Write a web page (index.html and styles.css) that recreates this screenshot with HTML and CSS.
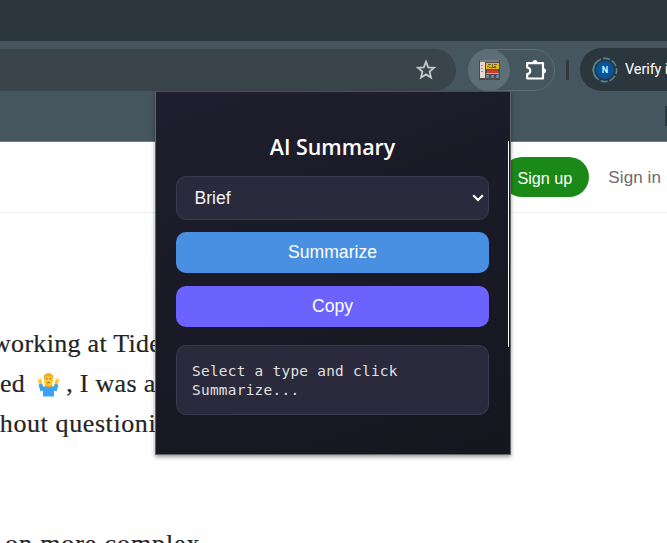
FILE: index.html
```html
<!DOCTYPE html>
<html lang="en">
<head>
<meta charset="utf-8">
<title>AI Summary</title>
<link rel="stylesheet" href="styles.css">
</head>
<body>
<div class="tabs"></div>
<div class="toolbar">
  <div class="omnibox">
    <svg width="22" height="22" viewBox="0 0 22 22"><path d="M11 2.7 13.2 8.3 19.1 8.8 14.6 12.6 16 18.5 11 15.4 6 18.5 7.4 12.6 2.9 8.8 8.8 8.3Z" fill="none" stroke="#c3c8ca" stroke-width="1.8"/></svg>
  </div>
  <div class="extensions">
    <div class="active-ext">
      <svg width="21" height="20" viewBox="0 0 21 20" shape-rendering="crispEdges">
        <path fill="#554943" d="M0 0h21v20H0z"/><path fill="#777b7d" d="M1 0h19v2H1z"/><path fill="#e6d8d0" d="M1 2h5v16H1z"/><path fill="#9b8d87" d="M2 5h2v1H2zM2 8h2v1H2zM2 11h2v1H2z"/><path fill="#e4b914" d="M7 3h13v6H7z"/><path fill="#765f1e" d="M9 4h3v1H9zM8 6h2v1H8zM13 4h1v3h-1zM15 4h3v1h-3zM15 6h2v1h-2zM10 7h7v1h-7z"/><path fill="#c93c30" d="M8 10h11v3H8z"/><path fill="#c3a08c" d="M7 13h13v1H7z"/><path fill="#438cad" d="M7 15h3v3H7zM12 15h3v3h-3zM17 15h3v3h-3z"/><path fill="#70adc2" d="M8 15h1v1H8zM13 15h1v1h-1zM18 15h1v1h-1z"/>
      </svg>
    </div>
    <svg class="puzzle" width="22" height="22" viewBox="0 0 22 22"><path d="M2.2 4.2H18V19.500H2.200V15.200C6.300 14.700 6.300 9 2.200 8.500Z" fill="none" stroke="#fff" stroke-width="2.200" stroke-linejoin="round"/><path d="M7.500 4a2.500 2.900 0 0 1 5 0zM18.500 9.200a2.500 2.600 0 0 1 0 5.200z" fill="#fff"/></svg>
  </div>
  <div class="divider"></div>
  <div class="profile">
    <svg width="26" height="26" viewBox="0 0 26 26"><circle cx="13" cy="13" r="11.6" fill="none" stroke="#568499" stroke-width="1.6" stroke-dasharray="7.2 2" stroke-dashoffset="3"/><path d="M4.8 21.2A11.6 11.6 0 0 1 4.8 4.8" fill="none" stroke="#568499" stroke-width="1.6"/><circle cx="13" cy="13" r="9" fill="#07559b"/><text class="initial" x="13" y="16.2" text-anchor="middle">N</text></svg>
    <span>Verify i</span>
  </div>
</div>
<div class="bookmarks"><i></i></div>
<header class="site-header"><a class="signup">Sign up</a><a class="signin">Sign in</a></header>
<main class="article">
  <p class="l1">working at Tide</p>
  <p class="l2"><span>ed</span><svg class="emoji" width="25" height="24" viewBox="0 0 25 24">
    <path d="M3 10 1 5.500 3.500 7 5 5l1 4 1 4 3 1v4L5 17zM22 10l2-4.500L21.500 7 20 5l-1 4-1 4-3 1v4l5-1z" fill="#ffc22e"/>
    <path d="M2.500 11.500 6 11l1.500 3 2.500-1h5l2.500 1L19 11l3.500.5L20.500 18.500l-2.500-1v6H7v-6l-2.500 1z" fill="#38a1f8"/>
    <path d="M9 11h7v2q-3.500 3-7 0z" fill="#efa51d"/><ellipse cx="12.500" cy="7" rx="4.800" ry="6" fill="#ffcb2e"/><path d="M7.600 6C7 1.500 10 .2 12.500.2S18 1.500 17.400 6L15.500 3.500h-6z" fill="#f0ab25"/><path d="M10 5.800h1.300M13.700 5.800H15M11.200 10q1.300-1.200 2.600 0" stroke="#6a4324" fill="none"/>
  </svg><span class="rest">, I was a</span></p>
  <p class="l3">thout questioni</p>
  <p class="l4">on more complex</p>
</main>
<section class="popup">
  <h1><span>AI Summary</span></h1>
  <div class="select"><span>Brief</span><svg width="12" height="8" viewBox="0 0 12 8"><path d="M1.200 1.200 6 6l4.800-4.800" fill="none" stroke="#fff" stroke-width="2.200"/></svg></div>
  <button class="summarize">Summarize</button>
  <button class="copy">Copy</button>
  <div class="result">Select a type and click<br>Summarize...</div>
  <i class="edge"></i>
</section>
</body>
</html>
```
FILE: styles.css
```css
* { box-sizing: border-box; }
body { margin: 0; width: 667px; height: 543px; overflow: hidden; position: relative; background: #fff; font-family: "Liberation Sans", Arial, sans-serif; }
svg { display: block; flex: none; }
.tabs { height: 41px; background: #2c373d; }
.toolbar { height: 51px; background: #45565f; display: flex; padding-top: 8px; align-items: flex-start; overflow: hidden; }
.omnibox { width: 456px; height: 42px; border-radius: 0 21px 21px 0; background: #39454b; display: flex; align-items: center; justify-content: flex-end; padding-right: 19px; flex: none; }
.extensions { width: 87px; height: 42px; margin-left: 12px; border: 1px solid #5d6d75; border-radius: 22px; display: flex; align-items: center; flex: none; }
.active-ext { width: 42px; height: 42px; margin-left: -1px; border-radius: 50%; background: #5e6e76; display: flex; align-items: center; justify-content: center; }
.puzzle { margin-left: 15px; margin-top: -1px; }
.divider { width: 3px; height: 20px; margin: 11px 12px 0 11px; background: #2f3a40; border-radius: 1px; flex: none; }
.profile { width: 87px; height: 43px; margin-top: -1px; margin-left: -1px; padding-left: 12px; background: #2c373d; border-radius: 22px 0 0 22px; display: flex; align-items: center; flex: none; color: #fff; font: 400 14.500px Roboto, sans-serif; letter-spacing: -.1px; white-space: nowrap; overflow: hidden; }
.profile span { margin-left: 7px; }
.initial { font: 500 9px Roboto, sans-serif; fill: #fff; }
.bookmarks { height: 50px; background: #45565f; border-bottom: 1px solid #6f7e85; display: flex; justify-content: flex-end; padding-top: 14px; }
.bookmarks i { width: 2px; height: 20px; background: #2f3a40; }
.site-header { height: 71px; border-bottom: 1px solid #f0f0f0; display: flex; justify-content: flex-end; align-items: flex-start; padding: 15px 6px 0 0; }
.signup { height: 40px; width: 87px; padding-right: 17px; border-radius: 20px; background: #1a8917; color: #fff; font-size: 16.2px; line-height: 43px; text-align: right; white-space: nowrap; margin-right: 19px; }
.signin { color: #6b6b6b; font-size: 17px; line-height: 42px; letter-spacing: .1px; }
.article { padding-top: 111px; color: #242424; font: 26px/40px "Liberation Serif", serif; -webkit-text-stroke: .2px #242424; }
.article p { margin: 0; height: 40px; white-space: nowrap; display: flex; }
.l1 { margin-left: -8px !important; letter-spacing: .3px; }
.l2 { letter-spacing: .3px; }
.l3 { margin-left: -8px !important; letter-spacing: .6px; }
.l4 { margin-top: 80px !important; padding-left: 5px; letter-spacing: .9px; }
.emoji { margin: 9px 5px 0 11px; }
.popup { position: absolute; left: 155px; top: 91px; width: 356px; height: 364px; padding: 40px 21px 0 20px; border: 1px solid #60666b; border-top-color: #455158; background: linear-gradient(160deg, #1e1e2e, #15161e); box-shadow: 0 2px 4px rgba(0,0,0,.4); }
.popup h1 { margin: 0; height: 44px; color: #fff; font: 600 21.400px/29px "Open Sans", sans-serif; text-align: center; }
.select { height: 44px; border: 1px solid #3a3a50; border-radius: 10px; background: #2a2a3c; color: #f2f2f7; font-size: 17.600px; display: flex; align-items: center; justify-content: space-between; padding: 0 4px 0 17.500px; }
.popup button { display: block; width: 100%; height: 41px; border: 0; border-radius: 10px; padding: 0; color: #fff; font: 17.600px "Liberation Sans", sans-serif; }
.popup .summarize { margin-top: 12px; background: #4a90e2; }
.popup .copy { margin-top: 13px; background: #6c63ff; }
.result { height: 70px; margin-top: 18px; border: 1px solid #3a3a50; border-radius: 10px; background: #2a2a3c; padding: 16px 15px; color: #e0e0e0; font: 14.400px/19px "DejaVu Sans Mono", monospace; letter-spacing: .28px; white-space: nowrap; }
.edge { position: absolute; left: 352px; top: 49px; width: 1px; height: 206px; background: #fff; }
```
